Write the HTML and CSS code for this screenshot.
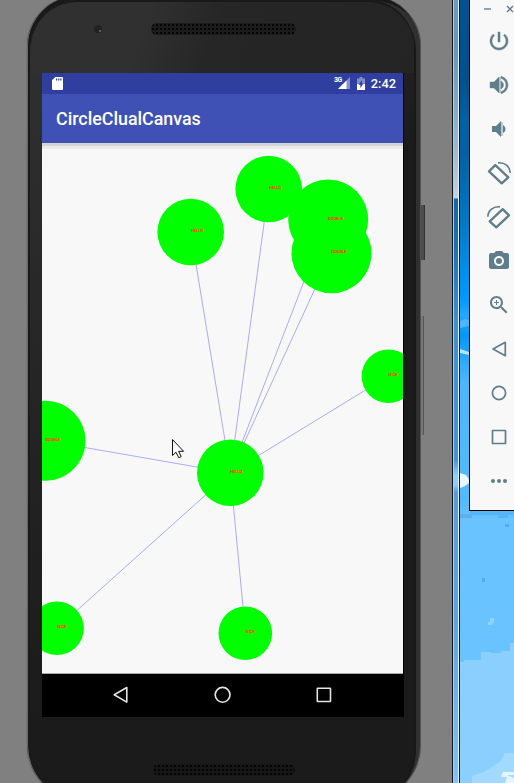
FILE: index.html
```html
<!DOCTYPE html>
<html lang="en">
<head>
<meta charset="utf-8">
<title>CircleClualCanvas</title>
<link rel="stylesheet" href="styles.css">
</head>
<body>
<main class="window">
  <section class="phone">
    <div class="top-bezel">
      <span class="lens"></span>
      <span class="speaker"></span>
    </div>
    <div class="screen">
      <div class="status-bar">
        <svg class="sd" viewBox="0 0 11 13"><path d="M3.300 0H10a1 1 0 0 1 1 1v11a1 1 0 0 1-1 1H1a1 1 0 0 1-1-1V3.300z" fill="#fff"/><path d="M4 1.500h1.200v2H4zM6.200 1.500h1.200v2H6.200zM8.300 1.500h1.200v2H8.300z" fill="#303f9f"/></svg>
        <span class="network">3G</span>
        <svg class="signal" viewBox="0 0 12 12"><path d="M12 0v12H0z" fill="#8791cc"/><path d="M8.500 3.500V12H0z" fill="#fff"/></svg>
        <svg class="battery" viewBox="0 0 8 13"><path d="M2.500 0h3v1.500H8V13H0V1.500h2.500z" fill="#838cc5"/><path d="M0 7h8v6H0z" fill="#fff"/><path d="M4.800 3v3.500h1.700L3.300 11V7.800H1.500z" fill="#303f9f"/></svg>
        <span class="clock">2:42</span>
      </div>
      <header class="app-bar"><h1>CircleClualCanvas</h1></header>
      <svg class="canvas" viewBox="42 143 361 530">
        <g class="links">
          <path d="M230.300 472.800L190.700 232M230.300 472.800L268.700 189M230.300 472.800L328 219M230.300 472.800L331.300 253.300M230.300 472.800L388.500 376M230.300 472.800L45.500 440.700M230.300 472.800L57 628.300M230.300 472.800L245.500 633.300"/>
        </g>
        <g class="nodes">
          <circle cx="190.700" cy="232" r="33.300"/>
          <circle cx="268.700" cy="189" r="33.300"/>
          <circle cx="328.200" cy="219.500" r="40"/>
          <circle cx="331.500" cy="253.300" r="40"/>
          <circle cx="388.400" cy="376.200" r="26.800"/>
          <circle cx="45.500" cy="440.800" r="40"/>
          <circle cx="230.300" cy="472.800" r="33.300"/>
          <circle cx="57" cy="628.300" r="26.800"/>
          <circle cx="245.300" cy="633.300" r="26.800"/>
        </g>
        <g class="labels">
          <text x="191" y="232.300" textLength="12">HELLO</text>
          <text x="269" y="189.300" textLength="12">HELLO</text>
          <text x="328" y="219.800" textLength="15">DOUBLE</text>
          <text x="331.500" y="253.300" textLength="15">DOUBLE</text>
          <text x="388.500" y="376.300" textLength="9">NICE</text>
          <text x="45.500" y="441" textLength="14.500">DOUBLE</text>
          <text x="230.300" y="473" textLength="12">HELLO</text>
          <text x="57.500" y="628.300" textLength="9">NICE</text>
          <text x="245.800" y="633.300" textLength="9">NICE</text>
        </g>
        <path class="pointer" d="M172.500 439.500v16l3.500-3.300 2.800 5.600 2.400-1.200-2.600-5.300h5z"/>
      </svg>
      <nav class="nav-bar">
        <svg viewBox="0 0 18 18"><path d="M14.800 1.500v14.600L2.200 8.800z"/></svg>
        <svg viewBox="0 0 18 18"><circle cx="8.600" cy="8.800" r="7.400"/></svg>
        <svg viewBox="0 0 18 18"><rect x="2.300" y="2.300" width="13.200" height="13.200" rx=".5"/></svg>
      </nav>
    </div>
    <div class="bottom-bezel"><span class="speaker"></span></div>
  </section>
  <div class="side-keys"><i class="power-key"></i><i class="volume-key"></i></div>
</main>
<div class="frame"></div>
<section class="desktop">
  <svg class="clouds" viewBox="460 0 54 783" preserveAspectRatio="none">
    <path d="M460 321l5-2 4 1v6l-9 2z" fill="#4ab8ff"/>
    <path d="M460 349l9 3v3l-9-2z" fill="#b5e4ff"/>
    <path d="M460 473l6 2 3 4v4l-4 3-5 2z" fill="#eaf7ff"/>
    <path d="M460 514h12v4h-12z" fill="#62aee6"/>
    <path d="M470 511h44v4h-6v3h-10v-3h-28z" fill="#55b5f7"/>
    <path d="M505 524h4v3h-4zM482 578h3v4h-3z" fill="#59a9e2"/>
    <path d="M490 618h4v4l-2 3h-4v-3h2z" fill="#8dd3ff"/>
    <path d="M460 662h4v-2h17v-8h10v1h10v-2h9v-8h4v140h-54z" fill="#8bcfff"/>
    <path d="M472 783v-7l12-4 16-10 5-9h9v30z" fill="#a2daff"/>
    <path d="M503 772h11v3h-7l7 3v5h-9l2-6h-6z" fill="#e4f5ff"/>
  </svg>
  <aside class="toolbar">
    <div class="controls">
      <svg viewBox="0 0 8 8"><path class="faint" d="M0 4h7"/></svg>
      <svg viewBox="0 0 8 8"><path d="M1 1l6 6M7 1L1 7"/></svg>
    </div>
    <svg viewBox="0 0 24 24"><path d="M13 3h-2v10h2V3zm4.830 2.170l-1.420 1.420C17.990 7.860 19 9.810 19 12c0 3.870-3.130 7-7 7s-7-3.130-7-7c0-2.190 1.010-4.140 2.580-5.420L6.170 5.170C4.230 6.820 3 9.260 3 12c0 4.970 4.030 9 9 9s9-4.030 9-9c0-2.740-1.230-5.180-3.170-6.830z" stroke="#607d8b" stroke-width=".5"/></svg>
    <svg viewBox="0 0 24 24"><path class="tint" d="M12 4h2v16h-2z"/><path d="M3 9v6h4l5 5V4L7 9H3zm13.500 3c0-1.770-1.020-3.290-2.500-4.030v8.050c1.480-.73 2.500-2.250 2.500-4.020zM14 3.230v2.060c2.890.86 5 3.540 5 6.710s-2.110 5.850-5 6.710v2.060c4.010-.91 7-4.490 7-8.770s-2.990-7.860-7-8.770z" stroke="#607d8b" stroke-width=".4"/></svg>
    <svg viewBox="0 0 24 24"><path class="tint" d="M14 5h2v14h-2z"/><path d="M18.500 12c0-1.770-1.020-3.290-2.500-4.030v8.050c1.480-.73 2.500-2.250 2.500-4.020zM5 9v6h4l5 5V4L9 9H5z"/></svg>
    <svg viewBox="0 0 24 24"><path class="line" d="M2 10.300L8.300 4.200 21.300 16.300 14.700 22.300z"/><path class="arc" d="M11 1.900C17.500 1 23 5.500 23.200 11.800"/></svg>
    <svg viewBox="0 0 24 24"><path class="line" d="M22 10.300L15.700 4.200 2.700 16.300 9.300 22.300z"/><path class="arc" d="M13 1.900C6.500 1 1 5.500 .8 11.800"/></svg>
    <svg viewBox="0 0 24 24"><circle cx="12" cy="12" r="3"/><path d="M9 2L7.170 4H4c-1.100 0-2 .9-2 2v12c0 1.100.9 2 2 2h16c1.100 0 2-.9 2-2V6c0-1.100-.9-2-2-2h-3.170L15 2H9zm3 15c-2.760 0-5-2.240-5-5s2.240-5 5-5 5 2.240 5 5-2.240 5-5 5z"/></svg>
    <svg viewBox="0 0 24 24"><path d="M15.500 14h-.79l-.28-.27C15.410 12.590 16 11.110 16 9.500 16 5.910 13.090 3 9.500 3S3 5.910 3 9.500 5.910 16 9.500 16c1.610 0 3.090-.59 4.230-1.570l.27.28v.79l5 4.990L20.490 19l-4.990-5zm-6 0C7.010 14 5 11.990 5 9.500S7.010 5 9.500 5 14 7.010 14 9.500 11.990 14 9.500 14zM12 10h-2v2H9v-2H7V9h2V7h1v2h2v1z"/></svg>
    <svg viewBox="0 0 24 24"><path class="thin" d="M18.300 5.300v13.400L6 12z"/></svg>
    <svg viewBox="0 0 24 24"><circle class="thin" cx="12" cy="12" r="6.600"/></svg>
    <svg viewBox="0 0 24 24"><rect class="thin" x="5.500" y="5.500" width="13" height="13"/></svg>
    <svg viewBox="0 0 24 24"><circle cx="6" cy="12" r="2"/><circle cx="12" cy="12" r="2"/><circle cx="18" cy="12" r="2"/></svg>
  </aside>
</section>
</body>
</html>
```
FILE: styles.css
```css
* { box-sizing: border-box; }
body {
  margin: 0;
  width: 514px;
  height: 783px;
  display: flex;
  overflow: hidden;
  font-family: Roboto, sans-serif;
  background: #808080;
}
svg { display: block; flex: none; }
.window {
  width: 452px;
  height: 783px;
  display: flex;
  overflow: hidden;
  background: #808080;
}
.phone {
  flex: none;
  width: 394px;
  height: 805px;
  margin: -4px 0 0 27px;
  padding: 4px 0 0 15px;
  border-radius: 50px 50px 56px 56px;
  background:
    linear-gradient(#303030, #2d2d2d 150px, #222 480px, #1b1b1b 720px) 0 0 / 40px 100% no-repeat,
    linear-gradient(#242424, #1b1b1b 150px);
  box-shadow: -1px 0 #777, inset 1px 0 #686868, inset -1px 0 #555, inset 3px 5px #191919, inset -5px 5px #303030, inset -7px 6px #181818;
}
.top-bezel {
  height: 73px;
  width: 383px;
  margin-left: -11px;
  padding-left: 11px;
  display: flex;
  background: linear-gradient(110deg, #303030 0, #303030 30%, #262626 48%, #242424 100%);
  border-radius: 46px 46px 0 0;
  box-shadow: inset 0 2px #191919;
}
.lens {
  width: 8px;
  height: 8px;
  margin: 25px 0 0 52px;
  border-radius: 50%;
  background: radial-gradient(circle at 75% 75%, #65595c 0 1px, #222 1.500px);
}
.speaker {
  width: 145px;
  height: 12px;
  border-radius: 6px;
  background: radial-gradient(circle, #050505 .8px, transparent 1.100px) 0 0 / 4px 4px, #1c1c1c;
}
.top-bezel .speaker { margin: 23px 0 0 49px; }
.screen { width: 362px; height: 644px; background: #000; }
.status-bar {
  width: 361px;
  height: 21px;
  padding: 0 7px 0 10px;
  display: flex;
  background: #303f9f;
  color: #fff;
}
.sd { width: 11px; height: 13px; margin-top: 4px; }
.network { margin: 3px 0 0 auto; font: 700 7px/8px Roboto, sans-serif; letter-spacing: -.5px; }
.signal { width: 12px; height: 12px; margin: 4px 7px 0 -4px; }
.battery { width: 8px; height: 13px; margin: 4px 6px 0 0; }
.clock { font-size: 12.800px; line-height: 22px; font-weight: 500; }
.app-bar {
  position: relative;
  width: 361px;
  height: 49px;
  padding-left: 14px;
  background: #3f51b5;
  box-shadow: 0 3px #d4d4d4, 0 6px #ebebeb;
}
.app-bar h1 { margin: 0; font-size: 17.850px; line-height: 49px; font-weight: 500; color: #fff; }
.canvas { width: 361px; height: 531px; background: #f8f8f8; border-bottom: 1px solid #aaa; }
.links { fill: none; stroke: #2020ff; stroke-opacity: .45; stroke-width: .8; }
.nodes { fill: #0f0; }
.labels { fill: #ff3c00; stroke: #ff3c00; stroke-width: .15; font: 500 4px Roboto, sans-serif; }
.pointer { fill: #fff; stroke: #111; stroke-width: 1; }
.nav-bar {
  height: 43px;
  padding: 0 71px 2px 70px;
  display: flex;
  align-items: center;
  justify-content: space-between;
}
.nav-bar svg { width: 18px; height: 18px; fill: none; stroke: #e4e4e4; stroke-width: 1.600; stroke-linejoin: round; }
.bottom-bezel { padding: 47px 0 0 111px; display: flex; }
.bottom-bezel .speaker { width: 142px; background-color: #161616; }
.side-keys { padding-top: 205px; }
.side-keys i { display: block; width: 4px; background: #4c4c4c; border-right: 1px solid #333; }
.side-keys .power-key { height: 55px; }
.side-keys .volume-key { width: 3px; height: 119px; margin-top: 56px; background: #777; border-color: #555; }
.frame {
  width: 8px;
  border: solid;
  border-width: 0 1px 0 1px;
  border-color: #1d4d73 #101820;
  background: linear-gradient(#6a9abd 0, #6796b8 50px, #9fb8cd 150px, #c3d3e1 198px, #1767a3 199px, #1d71b4 250px, #3d91d1 320px, #4594d5 460px, #8bcfff 475px, #8bcfff 485px, #589bd7 492px, #5da3df 620px, #82c2f4 783px);
  box-shadow: inset 1px 0 #a5d0ee, inset -1px 0 #e6f2fa;
}
.desktop {
  position: relative;
  width: 54px;
  height: 783px;
  overflow: hidden;
  background: linear-gradient(#005291 0, #00518c 80px, #0061a3 120px, #0062a5 155px, #0078c4 220px, #008de6 265px, #009aff 300px, #24a9ff 315px, #0099f4 335px, #31adff 365px, #4bb7ff 383px, #50bbff 500px, #69c3ff 520px, #6ac3ff 100%);
}
.clouds { position: absolute; left: 0; top: 0; width: 54px; height: 783px; }
.toolbar {
  position: relative;
  width: 60px;
  height: 511px;
  margin-left: 9px;
  padding: 5px 0 0 17px;
  display: flex;
  flex-direction: column;
  gap: 20px;
  background: #f8f8f8;
  border: solid #000;
  border-width: 0 0 1px 1px;
  fill: #607d8b;
}
.toolbar svg { width: 24px; height: 24px; }
.controls { display: flex; gap: 14px; height: 8px; margin: 0 0 -4px -3px; }
.toolbar .controls svg { width: 8px; height: 8px; stroke: #607d8b; stroke-width: 1.300; }
.toolbar .controls .faint { stroke: #8fa4ae; stroke-width: 2; }
.tint { fill: #becbd1; }
.line, .arc, .thin { fill: none; stroke: #607d8b; stroke-width: 2.300; stroke-linejoin: round; }
.thin { stroke-width: 1.700; }
.arc { stroke-width: 1.700; }
```
